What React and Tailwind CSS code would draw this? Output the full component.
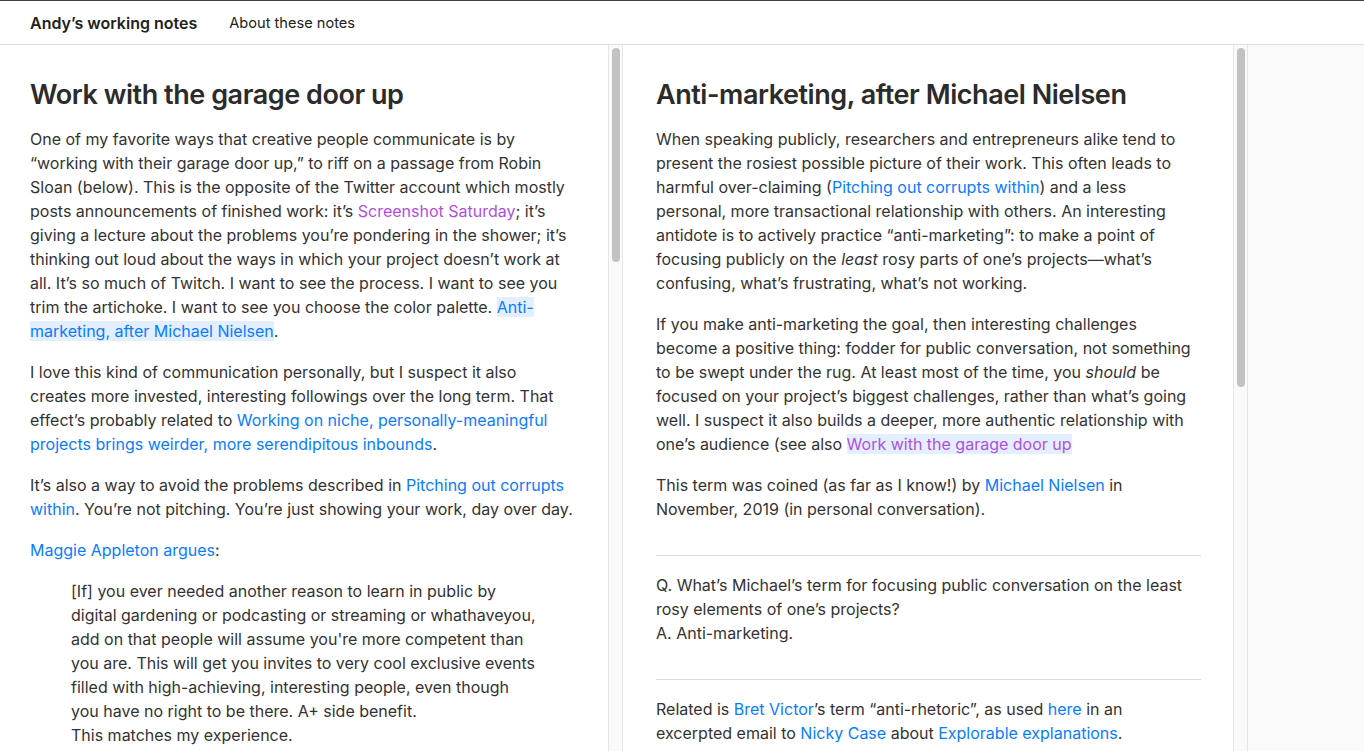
import React from "react";

const A = ({ children, visited, hl }) => (
  <a
    href="#"
    className={
      (visited ? "text-[#b04fe0]" : "text-[#0a7cff]") +
      (hl ? " bg-[#e3efff]" : "")
    }
  >
    {children}
  </a>
);

function Scrollbar({ thumb }) {
  return (
    <div className="w-[15px] shrink-0 bg-[#fafafa] border-l border-r border-[#e6e6e6] pt-[3px] flex justify-center">
      <div className={"w-[8px] rounded-full bg-[#c2c2c2] " + thumb} />
    </div>
  );
}

const P = ({ children, className = "" }) => (
  <p className={"mb-[17px] whitespace-nowrap " + className}>{children}</p>
);

export default function App() {
  return (
    <div
      className="h-[751px] w-[1364px] overflow-hidden flex flex-col bg-white text-[#333] border-t border-[#443f47]"
      style={{ fontFamily: "Inter, 'Noto Sans', sans-serif" }}
    >
      <header className="h-[44px] shrink-0 border-b border-[#dcdcdc] flex items-center pl-[30px] gap-[32px]">
        <span className="text-[16px] font-semibold text-[#222]">Andy’s working notes</span>
        <span className="text-[14.6px] text-[#222] mt-[3px]">About these notes</span>
      </header>

      <main className="flex flex-1 min-h-0">
        {/* first note */}
        <div className="flex shrink-0">
          <section className="w-[608px] pl-[30px] pt-[33px] text-[16px] leading-6 overflow-hidden">
            <div className="w-[545px]">
              <h1 className="text-[27px] leading-[34px] font-semibold text-[#2b2b2b] mb-[15px] tracking-[-0.45px]">
                Work with the garage door up
              </h1>
              <P>
                One of my favorite ways that creative people communicate is by<br />
                “working with their garage door up,” to riff on a passage from Robin<br />
                Sloan (below). This is the opposite of the Twitter account which mostly<br />
                posts announcements of finished work: it’s <A visited>Screenshot Saturday</A>; it’s<br />
                giving a lecture about the problems you’re pondering in the shower; it’s<br />
                thinking out loud about the ways in which your project doesn’t work at<br />
                all. It’s so much of Twitch. I want to see the process. I want to see you<br />
                trim the artichoke. I want to see you choose the color palette. <A hl>Anti-<br />marketing, after Michael Nielsen</A>.
              </P>
              <P>
                I love this kind of communication personally, but I suspect it also<br />
                creates more invested, interesting followings over the long term. That<br />
                effect’s probably related to <A>Working on niche, personally-meaningful<br />projects brings weirder, more serendipitous inbounds</A>.
              </P>
              <P>
                It’s also a way to avoid the problems described in <A>Pitching out corrupts<br />within</A>. You’re not pitching. You’re just showing your work, day over day.
              </P>
              <P>
                <A>Maggie Appleton argues</A>:
              </P>
              <blockquote className="pl-[41px] whitespace-nowrap">
                [If] you ever needed another reason to learn in public by<br />
                digital gardening or podcasting or streaming or whathaveyou,<br />
                add on that people will assume you're more competent than<br />
                you are. This will get you invites to very cool exclusive events<br />
                filled with high-achieving, interesting people, even though<br />
                you have no right to be there. A+ side benefit.<br />
                This matches my experience.
              </blockquote>
            </div>
          </section>
          <Scrollbar thumb="h-[214px]" />
        </div>

        {/* second note */}
        <div className="flex shrink-0">
          <section className="w-[610px] pl-[33px] pt-[33px] text-[16px] leading-6 overflow-hidden">
            <div className="w-[545px]">
              <h1 className="text-[27px] leading-[34px] font-semibold text-[#2b2b2b] mb-[15px] tracking-[-0.45px]">
                Anti-marketing, after Michael Nielsen
              </h1>
              <P>
                When speaking publicly, researchers and entrepreneurs alike tend to<br />
                present the rosiest possible picture of their work. This often leads to<br />
                harmful over-claiming (<A>Pitching out corrupts within</A>) and a less<br />
                personal, more transactional relationship with others. An interesting<br />
                antidote is to actively practice “anti-marketing”: to make a point of<br />
                focusing publicly on the <em>least</em> rosy parts of one’s projects—what’s<br />
                confusing, what’s frustrating, what’s not working.
              </P>
              <P>
                If you make anti-marketing the goal, then interesting challenges<br />
                become a positive thing: fodder for public conversation, not something<br />
                to be swept under the rug. At least most of the time, you <em>should</em> be<br />
                focused on your project’s biggest challenges, rather than what’s going<br />
                well. I suspect it also builds a deeper, more authentic relationship with<br />
                one’s audience (see also <A visited hl>Work with the garage door up</A>
              </P>
              <P>
                This term was coined (as far as I know!) by <A>Michael Nielsen</A> in<br />
                November, 2019 (in personal conversation).
              </P>
              <hr className="mt-[34px] mb-[17px] border-[#dddddd]" />
              <p className="whitespace-nowrap">
                Q. What’s Michael’s term for focusing public conversation on the least<br />
                rosy elements of one’s projects?<br />
                A. Anti-marketing.
              </p>
              <hr className="mt-[34px] mb-[17px] border-[#dddddd]" />
              <P>
                Related is <A>Bret Victor</A>’s term “anti-rhetoric”, as used <A>here</A> in an<br />
                excerpted email to <A>Nicky Case</A> about <A>Explorable explanations</A>.
              </P>
            </div>
          </section>
          <Scrollbar thumb="h-[339px]" />
        </div>

        <div className="flex-1 bg-[#f9f9fa]" />
      </main>
    </div>
  );
}
